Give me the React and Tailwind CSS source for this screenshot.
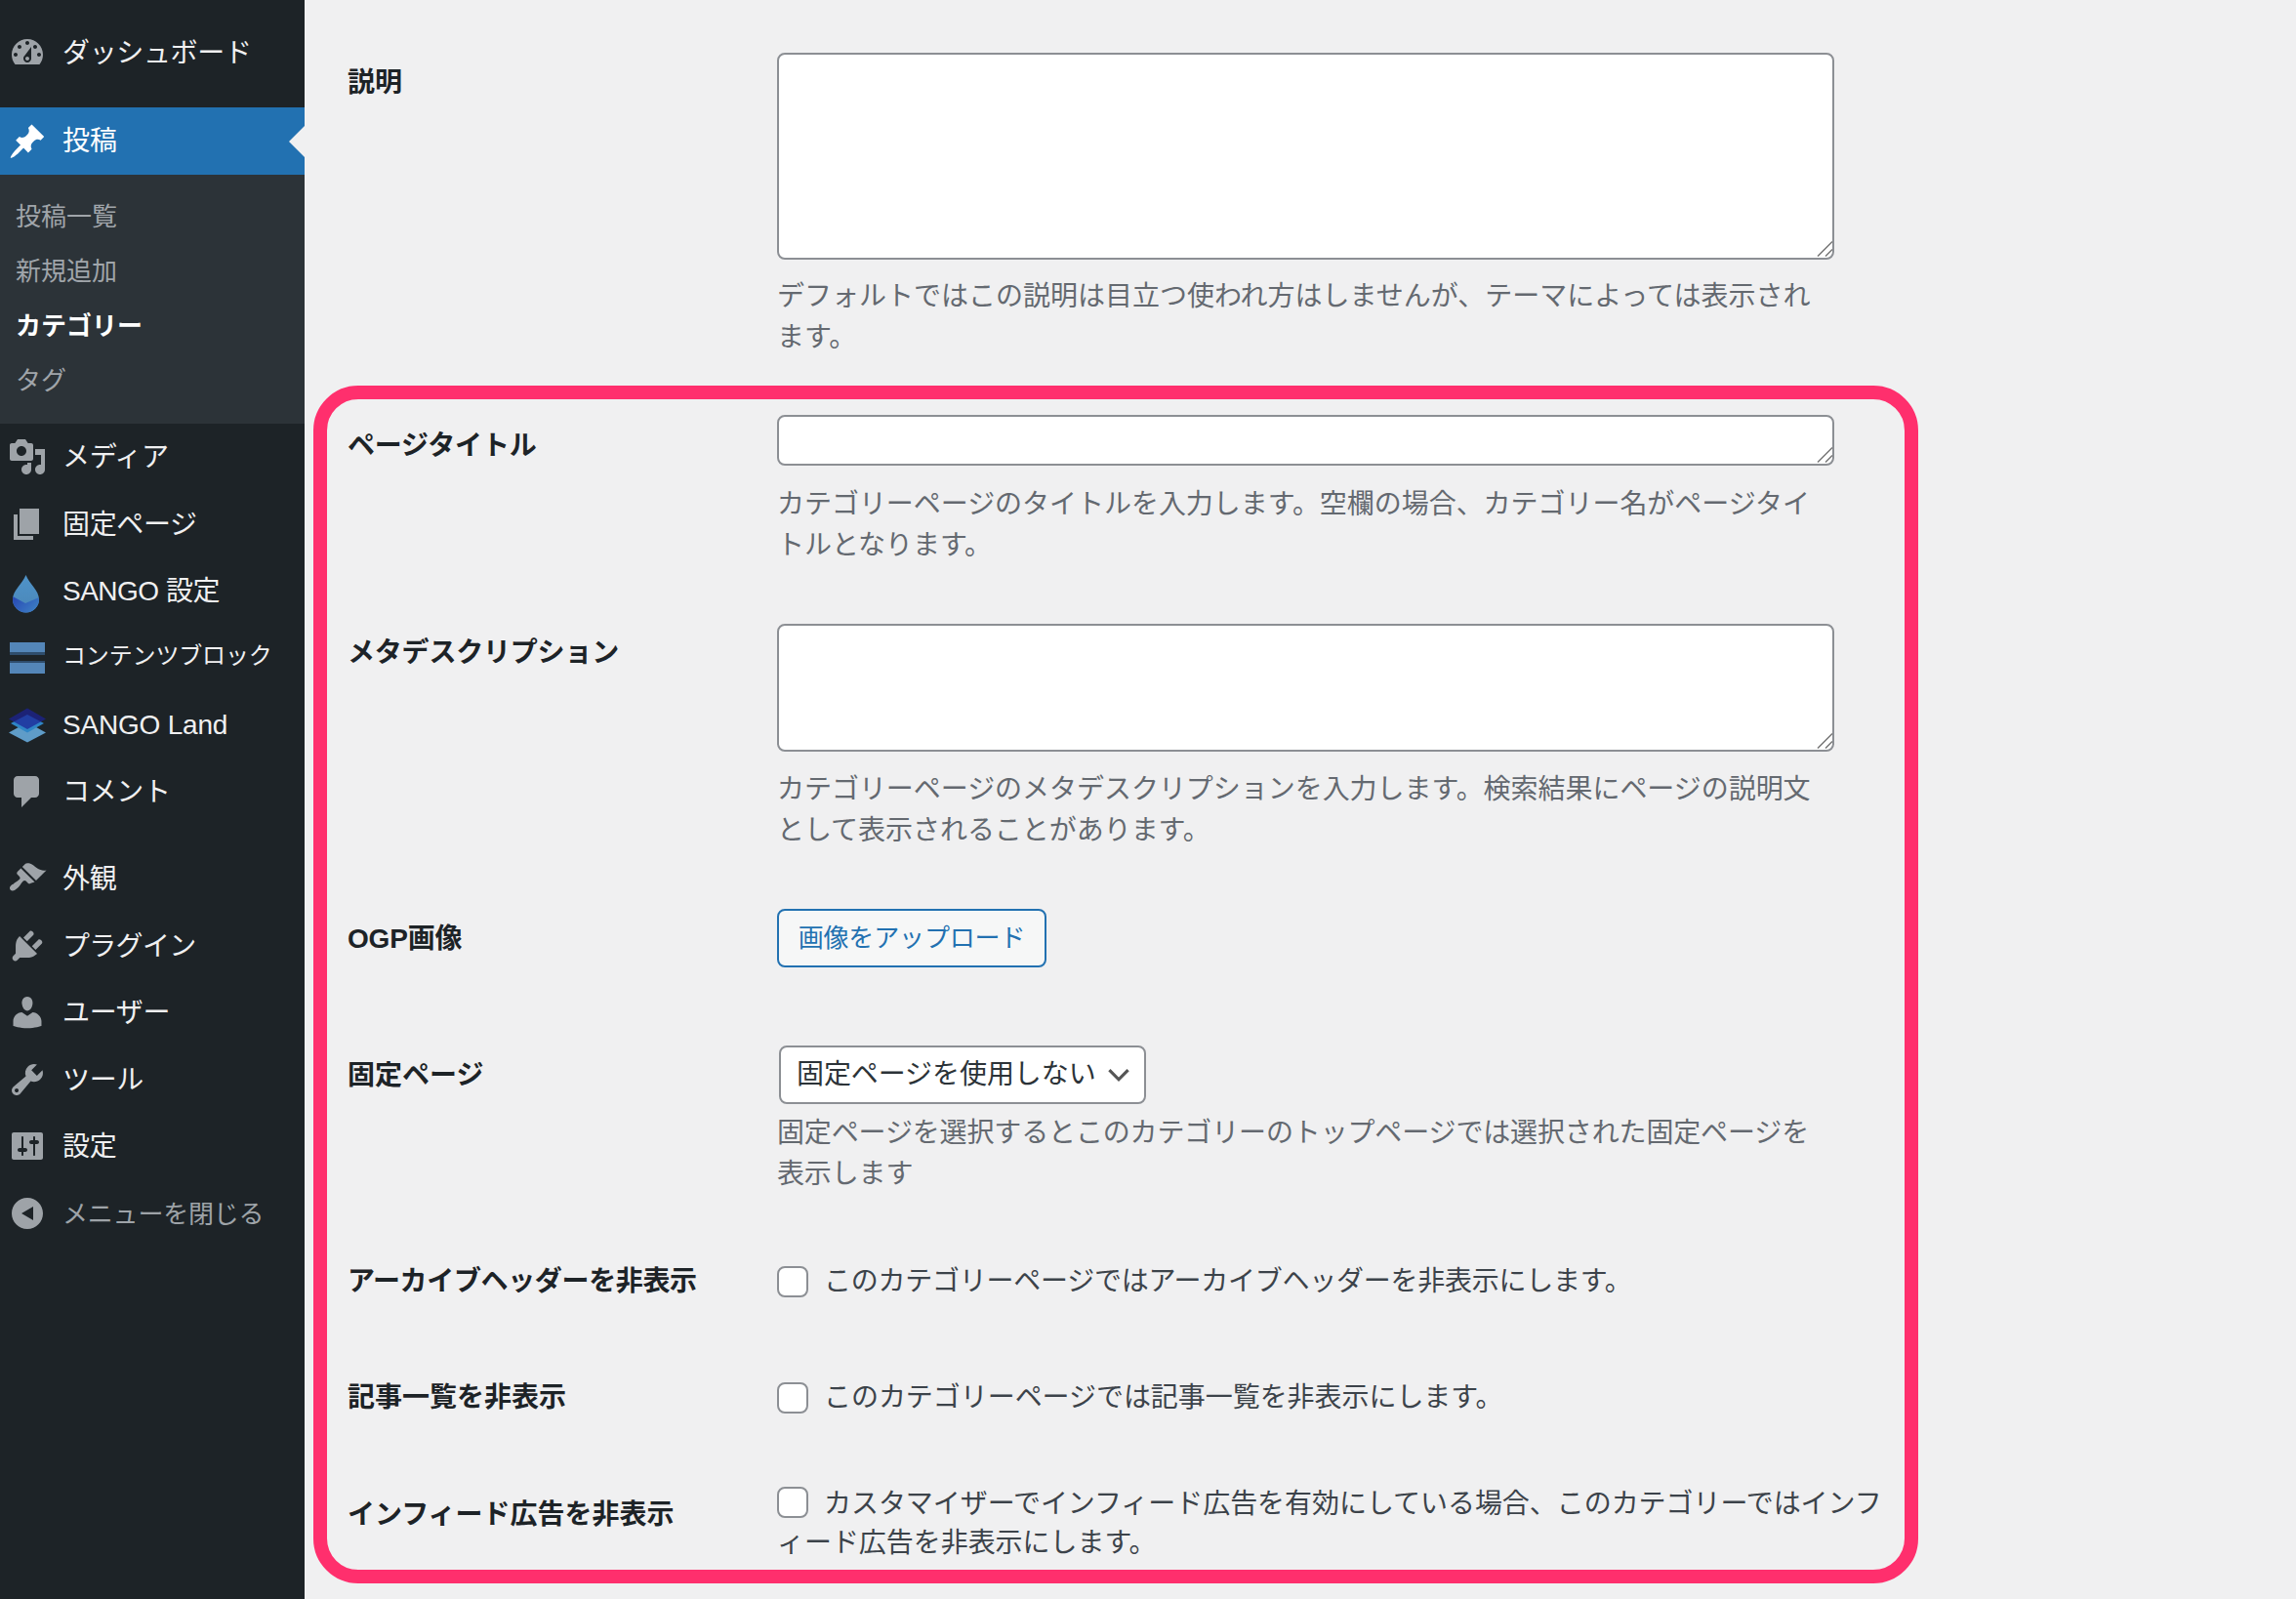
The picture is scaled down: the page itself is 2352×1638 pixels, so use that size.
import React from "react";

const font = "[font-family:'Liberation_Sans','Noto_Sans_CJK_JP',sans-serif]";

const icons = {
  dashboard: "M3.76 16h12.48c1.1-1.37 1.76-3.11 1.76-5 0-4.42-3.58-8-8-8s-8 3.58-8 8c0 1.89.66 3.63 1.76 5zM10 4c.55 0 1 .45 1 1s-.45 1-1 1-1-.45-1-1 .45-1 1-1zM6 6c.55 0 1 .45 1 1s-.45 1-1 1-1-.45-1-1 .45-1 1-1zm8 0c.55 0 1 .45 1 1s-.45 1-1 1-1-.45-1-1 .45-1 1-1zm-5.37 5.55L12 7v6c0 1.1-.9 2-2 2s-2-.9-2-2c0-.57.24-1.08.63-1.45zM4 10c.55 0 1 .45 1 1s-.45 1-1 1-1-.45-1-1 .45-1 1-1zm12 0c.55 0 1 .45 1 1s-.45 1-1 1-1-.45-1-1 .45-1 1-1zm-5 3c0-.55-.45-1-1-1s-1 .45-1 1 .45 1 1 1 1-.45 1-1z",
  post: "M10.44 3.02l1.82-1.82 6.36 6.35-1.83 1.82c-1.05-.68-2.48-.57-3.41.36l-.75.75c-.92.93-1.04 2.35-.35 3.41l-1.83 1.82-2.41-2.41-2.8 2.79c-.42.42-3.38 2.71-3.8 2.29s1.86-3.39 2.28-3.81l2.79-2.79L4.1 9.36l1.83-1.82c1.05.69 2.48.57 3.4-.36l.75-.75c.93-.92 1.05-2.35.36-3.41z",
  media: "M13 11V4c0-.55-.45-1-1-1h-1.67L9 1H5L3.67 3H2c-.55 0-1 .45-1 1v7c0 .55.45 1 1 1h10c.55 0 1-.45 1-1zM7 4.5c1.38 0 2.5 1.12 2.5 2.5S8.38 9.5 7 9.5 4.5 8.38 4.5 7 5.62 4.5 7 4.5zM14 6h5v10.5c0 1.38-1.12 2.5-2.5 2.5S14 17.88 14 16.5s1.12-2.5 2.5-2.5c.17 0 .34.02.5.05V9h-3V6zm-4 8.05V13h2v3.5c0 1.38-1.12 2.5-2.5 2.5S7 17.88 7 16.5 8.12 14 9.5 14c.17 0 .34.02.5.05z",
  page: "M6 15V2h10v13H6zm-1 1h8v2H3V5h2v11z",
  comments: "M5 2h9c1.1 0 2 .9 2 2v7c0 1.1-.9 2-2 2h-2l-5 5v-5H5c-1.1 0-2-.9-2-2V4c0-1.1.9-2 2-2z",
  appearance: "M14.48 11.06L7.41 3.99l1.5-1.5c.5-.56 2.3-.47 3.51.32 1.21.8 1.43 1.28 2.91 2.1 1.18.64 2.45 1.26 4.45.85zm-.71.71L6.7 4.7 4.93 6.47c-.39.39-.39 1.02 0 1.41l1.06 1.06c.39.39.39 1.03 0 1.42-.6.6-1.43 1.11-2.21 1.69-.35.26-.7.53-1.01.84C1.43 13.23.4 14.85 1.4 15.85s2.62-.03 3.96-1.36c.31-.31.58-.66.84-1.01.58-.78 1.09-1.61 1.69-2.21.39-.39 1.03-.39 1.42 0l1.06 1.06c.39.39 1.02.39 1.41 0z",
  plugins: "M13.11 4.36L9.87 7.6 8 5.73l3.24-3.24c.35-.34 1.05-.2 1.56.32.52.51.66 1.21.31 1.55zm-8 1.77l.91-1.12 9.01 9.01-1.19.84c-.71.71-2.63 1.16-3.82 1.16H6.14L4.9 17.26c-.59.59-1.54.59-2.12 0-.59-.58-.59-1.53 0-2.12l1.24-1.24v-3.88c0-1.13.4-3.19 1.09-3.89zm7.26 3.97l3.24-3.24c.34-.35 1.04-.21 1.55.31.52.51.66 1.21.31 1.55l-3.24 3.25z",
  users: "M10 9.25c-2.27 0-2.73-3.44-2.73-3.44C7 4.02 7.82 2 9.97 2c2.16 0 2.98 2.02 2.71 3.81 0 0-.41 3.44-2.68 3.44zm0 2.57L12.72 10c2.39 0 4.52 2.33 4.52 4.53v2.49s-3.65 1.13-7.24 1.13c-3.65 0-7.24-1.13-7.24-1.13v-2.49c0-2.25 1.94-4.48 4.47-4.48z",
  tools: "M16.68 9.77c-1.34 1.34-3.3 1.67-4.95.99l-5.41 6.52c-.99.99-2.59.99-3.58 0s-.99-2.59 0-3.57l6.52-5.42c-.68-1.65-.35-3.61.99-4.95 1.28-1.28 3.12-1.62 4.72-1.06l-2.89 2.89 2.82 2.82 2.86-2.87c.53 1.58.18 3.39-1.08 4.65zM3.81 16.21c.4.39 1.04.39 1.43 0 .4-.4.4-1.04 0-1.43-.39-.4-1.03-.4-1.43 0-.39.39-.39 1.03 0 1.43z",
  settings: "M18 16V4c0-.55-.45-1-1-1H3c-.55 0-1 .45-1 1v12c0 .55.45 1 1 1h14c.55 0 1-.45 1-1zM8 11h1c.55 0 1 .45 1 1s-.45 1-1 1H8v1.5c0 .28-.22.5-.5.5s-.5-.22-.5-.5V13H6c-.55 0-1-.45-1-1s.45-1 1-1h1V5.5c0-.28.22-.5.5-.5s.5.22.5.5V11zm5-2h-1c-.55 0-1-.45-1-1s.45-1 1-1h1V5.5c0-.28.22-.5.5-.5s.5.22.5.5V7h1c.55 0 1 .45 1 1s-.45 1-1 1h-1v5.5c0 .28-.22.5-.5.5s-.5-.22-.5-.5V9z",
  collapse: "M18 10c0-4.42-3.58-8-8-8s-8 3.58-8 8 3.58 8 8 8 8-3.58 8-8zm-5-3.5v7L7 10z",
};

function DashIcon({ name, className = "text-[#9ea3a8]" }) {
  return (
    <svg viewBox="0 0 20 20" className={`w-10 h-10 shrink-0 fill-current ${className}`}>
      <path d={icons[name]} fillRule="evenodd" />
    </svg>
  );
}

function DropIcon() {
  const shape = "M18.5 4C22 13 32 20 32 29A13.5 13.5 0 0 1 5 29C5 20 15 13 18.5 4Z";
  return (
    <svg viewBox="0 0 40 40" className="w-10 h-10 shrink-0 overflow-visible">
      <defs>
        <linearGradient id="dropTop" x1="0" y1="0" x2="0" y2="1">
          <stop offset="0" stopColor="#4f93c9" />
          <stop offset="1" stopColor="#4a87b8" />
        </linearGradient>
        <linearGradient id="dropLow" x1="0" y1="0.2" x2="1" y2="0.8">
          <stop offset="0" stopColor="#2848b4" />
          <stop offset="1" stopColor="#3f86c6" />
        </linearGradient>
        <clipPath id="dropClip">
          <path d={shape} />
        </clipPath>
      </defs>
      <path d={shape} fill="url(#dropTop)" />
      <polygon points="3,25 18,33 34,26 34,45 3,45" fill="url(#dropLow)" clipPath="url(#dropClip)" />
    </svg>
  );
}

function BlocksIcon() {
  return (
    <svg viewBox="0 0 40 40" className="w-10 h-10 shrink-0">
      <rect x="2" y="4" width="36" height="10" fill="#5486b8" />
      <rect x="2" y="14" width="36" height="3" fill="#2f4d6c" />
      <rect x="2" y="23" width="36" height="2" fill="#2f4d6c" />
      <rect x="2" y="25" width="36" height="11" fill="#5486b8" />
    </svg>
  );
}

function LandIcon() {
  return (
    <svg viewBox="0 0 40 40" className="w-10 h-10 shrink-0">
      <polygon points="20,18 39,28.5 20,38.5 1,28.5" fill="#5f9cc8" />
      <polygon points="20,10 37,19 20,28.5 3,19" fill="#2f86c6" />
      <polygon points="20,3.5 39,14.5 20,25 1,14.5" fill="#1c2396" fillOpacity="0.72" />
    </svg>
  );
}

function MenuItem({ icon, label, textClass = "text-[28px] text-[#f0f0f1] tracking-[-0.35px]" }) {
  return (
    <div className="h-[68.5px] flex items-center pl-2 gap-4">
      {icon}
      <span className={`leading-none whitespace-nowrap pt-[2px] ${textClass}`}>{label}</span>
    </div>
  );
}

function Sidebar() {
  return (
    <div className="w-[312px] shrink-0 h-full bg-[#1d2327] pt-5">
      <MenuItem icon={<DashIcon name="dashboard" />} label="ダッシュボード" />
      <div className="relative mt-[21.5px] h-[69px] bg-[#2271b1] flex items-center pl-2 gap-4">
        <DashIcon name="post" className="text-white" />
        <span className="text-[28px] leading-none text-white">投稿</span>
        <div className="absolute right-0 top-[19px] w-0 h-0 border-y-[16px] border-y-transparent border-r-[16px] border-r-[#f0f0f1]" />
      </div>
      <div className="h-[255px] bg-[#2c3338] pt-[15px] pl-4 text-[26px] text-[#a0a5aa]">
        <div className="h-[56px] flex items-center">投稿一覧</div>
        <div className="h-[56px] flex items-center">新規追加</div>
        <div className="h-[56px] flex items-center font-bold text-white">カテゴリー</div>
        <div className="h-[56px] flex items-center">タグ</div>
      </div>
      <MenuItem icon={<DashIcon name="media" />} label="メディア" />
      <MenuItem icon={<DashIcon name="page" />} label="固定ページ" />
      <MenuItem icon={<DropIcon />} label="SANGO 設定" textClass="text-[28px] text-[#f0f0f1] tracking-[-0.5px]" />
      <MenuItem icon={<BlocksIcon />} label="コンテンツブロック" textClass="text-[24px] text-[#f0f0f1] tracking-[-0.15px] -mt-[6px]" />
      <MenuItem icon={<LandIcon />} label="SANGO Land" textClass="text-[28px] text-[#f0f0f1] tracking-[-0.2px]" />
      <MenuItem icon={<DashIcon name="comments" />} label="コメント" />
      <div className="h-[21px]" />
      <MenuItem icon={<DashIcon name="appearance" />} label="外観" />
      <MenuItem icon={<DashIcon name="plugins" />} label="プラグイン" textClass="text-[28px] text-[#f0f0f1] tracking-[-0.7px]" />
      <MenuItem icon={<DashIcon name="users" />} label="ユーザー" />
      <MenuItem icon={<DashIcon name="tools" />} label="ツール" />
      <MenuItem icon={<DashIcon name="settings" />} label="設定" />
      <MenuItem icon={<DashIcon name="collapse" />} label="メニューを閉じる" textClass="text-[26px] text-[#9ea3a8] tracking-[-0.2px]" />
    </div>
  );
}

function Row({ label, labelClass, className, children }) {
  return (
    <div className={`grid grid-cols-[440px_1fr] ${className}`}>
      <div className={`text-[28px] leading-[42px] font-bold text-[#1d2327] whitespace-nowrap ${labelClass}`}>{label}</div>
      <div>{children}</div>
    </div>
  );
}

function Desc({ className = "mt-[17px]", children }) {
  return <p className={`w-[1083px] text-[28px] leading-[42px] text-[#646970] ${className}`}>{children}</p>;
}

function Area({ className }) {
  return (
    <div className={`relative w-[1083px] ${className}`}>
      <textarea className="block w-full h-full resize-none bg-white border-2 border-[#8c8f94] rounded-lg" />
      <svg viewBox="0 0 20 20" className="absolute right-[2px] bottom-[2px] w-5 h-5 stroke-[#777] stroke-[1.5]">
        <path d="M5 18.5L20 3.5M13 18.5L20 11.5" />
      </svg>
    </div>
  );
}

function Check({ className, children }) {
  return (
    <label className={`flex items-center gap-4 text-[28px] leading-[42px] text-[#3c434a] ${className}`}>
      <input type="checkbox" className="appearance-none w-8 h-8 shrink-0 bg-white border-2 border-[#8c8f94] rounded-lg" />
      <span>{children}</span>
    </label>
  );
}

export default function App() {
  return (
    <div className={`relative flex h-[1638px] overflow-hidden bg-[#f0f0f1] ${font}`}>
      <Sidebar />
      <div className="flex-1 pl-[44px] pt-[54px]">
        <Row label="説明" labelClass="mt-[10px]">
          <Area className="h-[212px]" />
          <Desc>デフォルトではこの説明は目立つ使われ方はしませんが、テーマによっては表示されます。</Desc>
        </Row>
        <Row label="ページタイトル" labelClass="mt-[11px] tracking-[-0.2px]" className="mt-[58px]">
          <Area className="h-[52px]" />
          <Desc className="mt-[19px] tracking-[-0.04px]">カテゴリーページのタイトルを入力します。空欄の場合、カテゴリー名がページタイトルとなります。</Desc>
        </Row>
        <Row label="メタデスクリプション" labelClass="mt-[9px] tracking-[-0.2px]" className="mt-[59px]">
          <Area className="h-[131px]" />
          <Desc className="mt-[18px] tracking-[-0.04px]">カテゴリーページのメタデスクリプションを入力します。検索結果にページの説明文として表示されることがあります。</Desc>
        </Row>
        <Row label="OGP画像" labelClass="mt-[10px] tracking-[-0.2px]" className="mt-[59px]">
          <button className="block w-[276px] h-[60px] bg-[#f6f7f7] border-2 border-[#2271b1] rounded-lg text-[26px] text-[#2271b1] tracking-[-0.15px]">画像をアップロード</button>
        </Row>
        <Row label="固定ページ" labelClass="mt-[10px]" className="mt-[80px]">
          <div className="ml-[2px] w-[376px] h-[60px] flex items-center justify-between pl-4 pr-[10px] bg-white border-2 border-[#8c8f94] rounded-lg text-[28px] text-[#2c3338] tracking-[-0.08px]">
            <span>固定ページを使用しない</span>
            <svg viewBox="0 0 20 20" className="w-8 h-8 fill-none stroke-[#555] stroke-2">
              <path d="M4 7l6 6 6-6" />
            </svg>
          </div>
          <Desc className="mt-[9px] tracking-[-0.14px]">固定ページを選択するとこのカテゴリーのトップページでは選択された固定ページを表示します</Desc>
        </Row>
        <Row label="アーカイブヘッダーを非表示" labelClass="tracking-[-0.35px]" className="mt-[68px]">
          <Check className="tracking-[-0.25px]">このカテゴリーページではアーカイブヘッダーを非表示にします。</Check>
        </Row>
        <Row label="記事一覧を非表示" className="mt-[77px]">
          <Check className="tracking-[-0.05px]">このカテゴリーページでは記事一覧を非表示にします。</Check>
        </Row>
        <Row label="インフィード広告を非表示" labelClass="mt-[12px]" className="mt-[66px]">
          <div className="w-[1135px] pt-[2px] text-[28px] leading-[40px] text-[#3c434a] tracking-[-0.05px]">
            <input type="checkbox" className="appearance-none inline-block align-[-5px] w-8 h-8 mr-4 bg-white border-2 border-[#8c8f94] rounded-lg" />
            カスタマイザーでインフィード広告を有効にしている場合、このカテゴリーではインフィード広告を非表示にします。
          </div>
        </Row>
      </div>
      <div className="absolute left-[321px] top-[395px] w-[1644px] h-[1227px] border-[14px] border-[#ff2f6d] rounded-[46px] pointer-events-none" />
    </div>
  );
}
